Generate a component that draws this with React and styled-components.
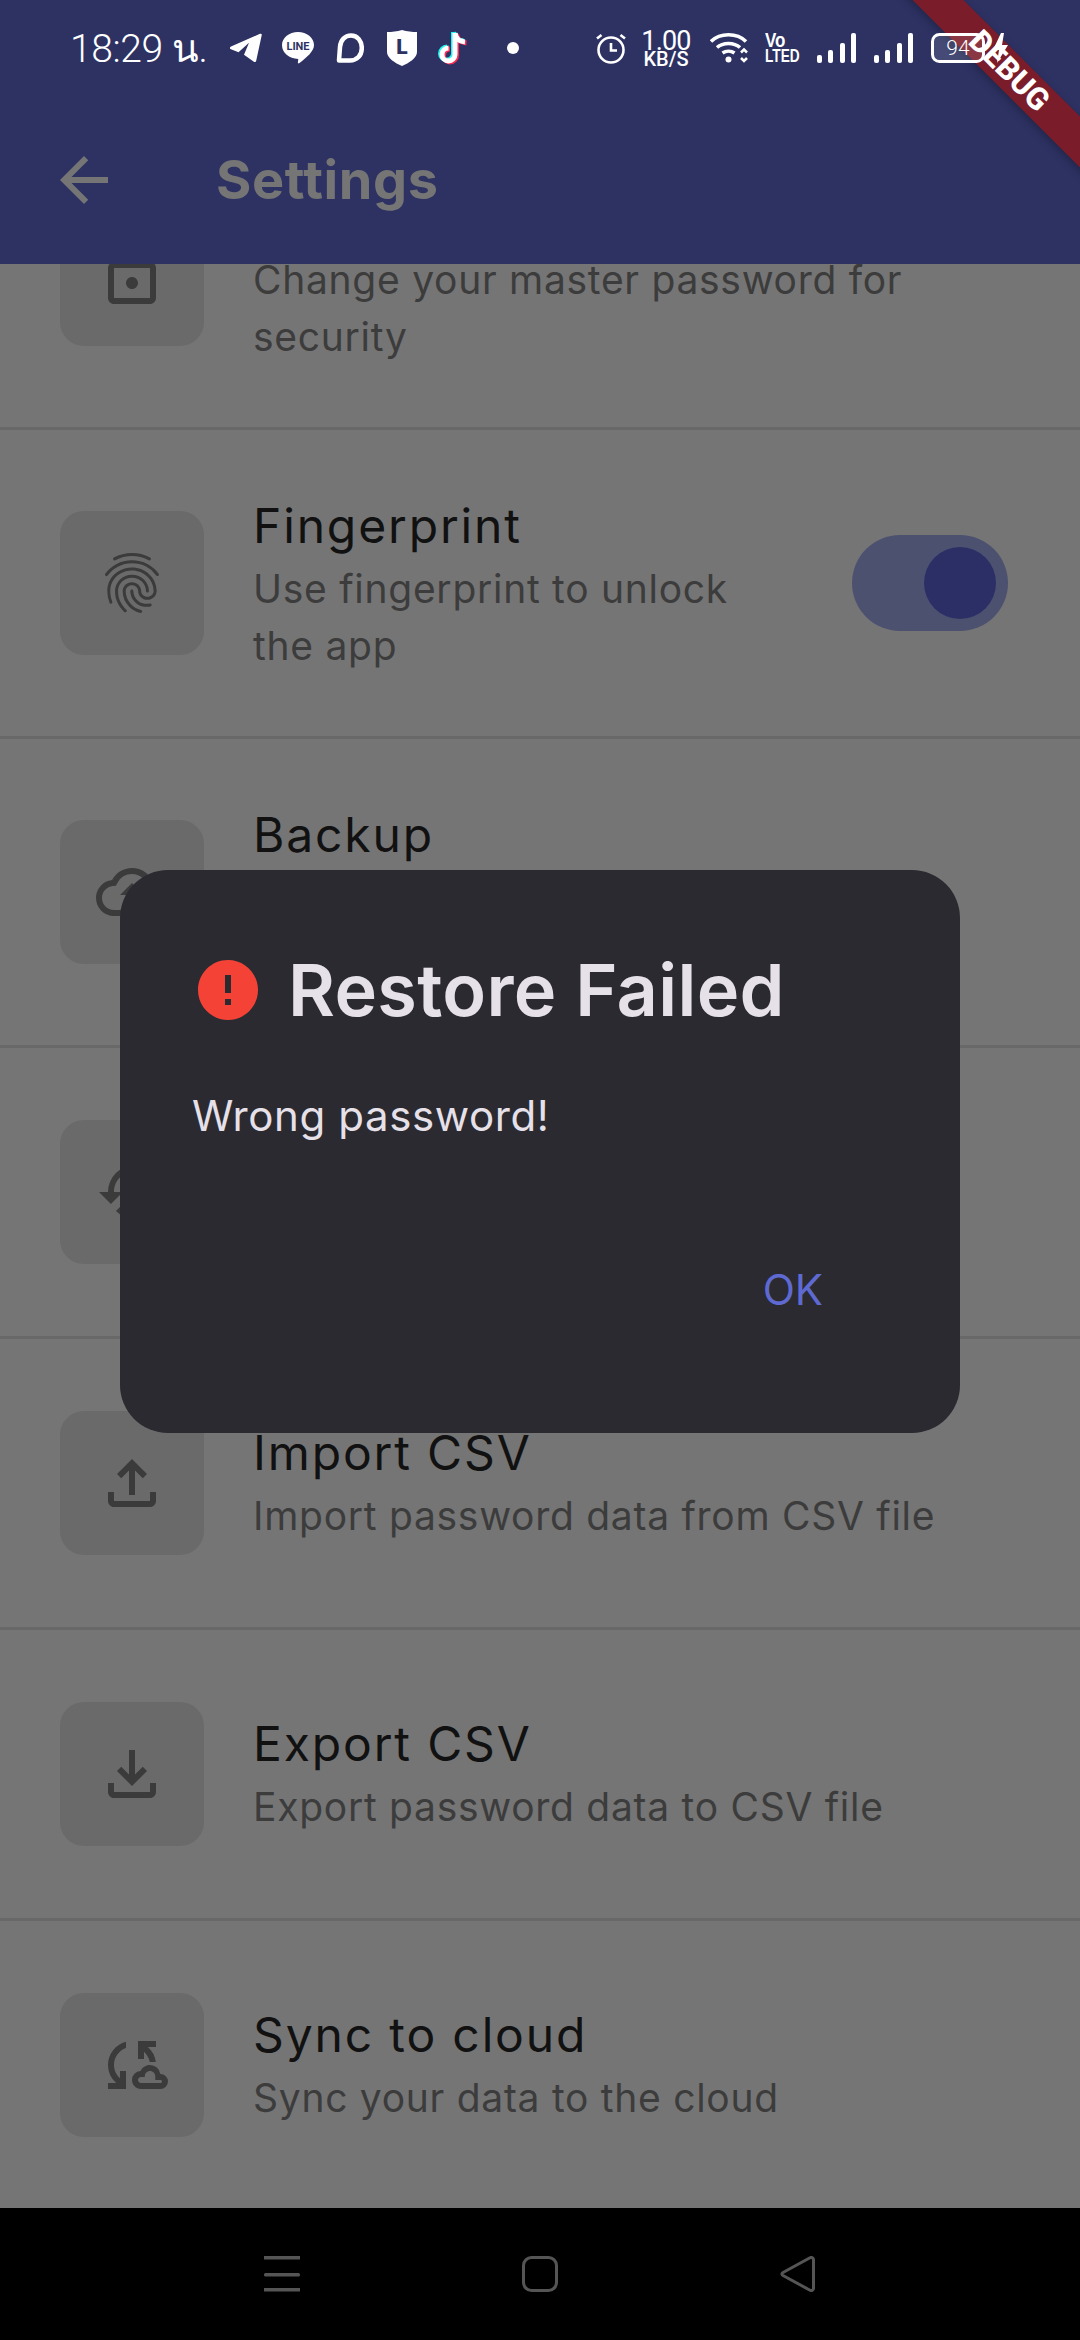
import React from "react";
import styled, { createGlobalStyle } from "styled-components";
import {
  MdArrowBack,
  MdError,
  MdFingerprint,
  MdOutlineBackup,
  MdOutlineCloudSync,
  MdOutlineFileDownload,
  MdOutlineFileUpload,
  MdOutlineLock,
  MdRestore,
} from "react-icons/md";

const GlobalStyle = createGlobalStyle`
  html, body {
    margin: 0;
    padding: 0;
    background: #000;
  }
  * {
    box-sizing: border-box;
  }
`;

const Screen = styled.div`
  position: relative;
  display: flex;
  flex-direction: column;
  width: 1080px;
  height: 2340px;
  overflow: hidden;
  font-family: Inter, "Noto Sans", sans-serif;
  background: #757575;
`;

const TopBar = styled.header`
  position: relative;
  z-index: 2;
  flex: none;
  height: 264px;
  overflow: hidden;
  background: #2d3263;
`;

const StatusBar = styled.div`
  position: relative;
  z-index: 1;
  display: flex;
  justify-content: space-between;
  align-items: center;
  height: 96px;
  padding: 0 71px 0 70px;
  color: #fff;
`;

const StatusGroup = styled.div`
  display: flex;
  align-items: center;
`;

const Clock = styled.span`
  width: 130px;
  font-family: Roboto, "Noto Sans", sans-serif;
  font-size: 39px;
  font-weight: 300;
  letter-spacing: -0.4px;
  white-space: nowrap;
`;

const StatusIcon = styled.svg`
  display: block;
  flex: none;
  margin-left: ${({ $left }) => $left || 0}px;
`;

const Speed = styled.div`
  display: flex;
  flex-direction: column;
  align-items: center;
  margin-left: 16px;
  width: 48px;
  font-family: Roboto, sans-serif;
  line-height: 1;
`;

const SpeedValue = styled.span`
  font-size: 27px;
  height: 22px;
  line-height: 22px;
  letter-spacing: -0.8px;
`;

const SpeedUnit = styled.span`
  font-size: 20px;
  font-weight: 500;
  height: 15px;
  line-height: 15px;
`;

const NetworkType = styled.div`
  display: flex;
  flex-direction: column;
  margin-left: 16px;
  width: 35px;
  font-family: "Liberation Sans", sans-serif;
  font-weight: 700;
  line-height: 15px;
`;

const NetworkLine = styled.span`
  font-size: ${({ $size }) => $size}px;
  transform: scaleX(${({ $squeeze }) => $squeeze});
  transform-origin: left center;
  white-space: nowrap;
`;

const Toolbar = styled.div`
  display: flex;
  align-items: center;
  height: 168px;
  padding-left: 48px;
  color: #757575;
  svg {
    flex: none;
    margin-right: 96px;
  }
`;

const PageTitle = styled.h1`
  margin: 0;
  font-size: 54px;
  font-weight: 700;
  line-height: 1;
  letter-spacing: 0.6px;
`;

const Content = styled.main`
  flex: 1;
  min-height: 0;
  overflow: hidden;
`;

const SettingsList = styled.div`
  margin-top: -143px;
`;

const Row = styled.div`
  display: flex;
  align-items: center;
  gap: 49px;
  min-height: 291px;
  padding: 62px 72px 62px 60px;
  border-bottom: 3px solid #686868;
`;

const IconBox = styled.div`
  display: flex;
  justify-content: center;
  align-items: center;
  flex: none;
  width: 144px;
  height: 144px;
  border-radius: 24px;
  background: #6a6a6a;
  color: #3b3b3b;
`;

const RowText = styled.div`
  flex: 1;
  min-width: 0;
  padding-top: ${({ $wrapped }) => ($wrapped ? 10 : 6)}px;
`;

const RowTitle = styled.div`
  margin-bottom: 10px;
  font-size: 48px;
  line-height: 48px;
  letter-spacing: 1.85px;
  color: #111;
`;

const RowSubtitle = styled.div`
  font-size: 39px;
  line-height: 57px;
  letter-spacing: 0.72px;
  color: #3c3c3c;
`;

const Toggle = styled.div`
  display: flex;
  justify-content: flex-end;
  align-items: center;
  flex: none;
  width: 156px;
  height: 96px;
  margin-left: 12px;
  padding-right: 12px;
  border-radius: 48px;
  background: #4d5170;
`;

const ToggleKnob = styled.div`
  width: 72px;
  height: 72px;
  border-radius: 50%;
  background: #2b2f66;
`;

const NavBar = styled.nav`
  position: relative;
  z-index: 2;
  display: flex;
  justify-content: space-between;
  align-items: center;
  flex: none;
  height: 132px;
  padding: 0 264px;
  background: #000;
`;

const Dialog = styled.div`
  position: absolute;
  z-index: 3;
  top: 870px;
  left: 120px;
  width: 840px;
  padding: 72px 72px 96px;
  border-radius: 48px;
  background: #2b2a31;
`;

const DialogHeader = styled.div`
  display: flex;
  align-items: center;
  gap: 24px;
  height: 96px;
  color: #f44336;
`;

const DialogTitle = styled.h2`
  margin: 0;
  font-size: 72px;
  font-weight: 600;
  line-height: 96px;
  letter-spacing: 0.35px;
  color: #e6e1e9;
`;

const DialogBody = styled.p`
  margin: 51px 0 0;
  font-size: 42px;
  line-height: 54px;
  letter-spacing: 0.6px;
  color: #e6e1e9;
`;

const DialogActions = styled.div`
  display: flex;
  justify-content: flex-end;
  margin-top: 98px;
`;

const OkButton = styled.button`
  height: 96px;
  padding: 0 65px 0 0;
  border: 0;
  background: none;
  font-family: inherit;
  font-size: 42px;
  color: #5e6ad2;
`;

const DebugBanner = styled.div`
  position: absolute;
  top: 53px;
  right: -129px;
  width: 400px;
  height: 36px;
  transform: rotate(45deg);
  background: #7b1c2a;
  box-shadow: 0 3px 9px rgba(0, 0, 0, 0.25);
  color: #fff;
  font-family: Roboto, sans-serif;
  font-size: 31px;
  font-weight: 800;
  line-height: 36px;
  text-align: center;
`;

const TIKTOK_LAYERS = [
  { color: "#25f4ee", dx: -1.5, dy: -1 },
  { color: "#fe2c55", dx: 1.5, dy: 1 },
  { color: "#fff", dx: 0, dy: 0 },
];

const TelegramIcon = () => (
  <StatusIcon $left={30} width="32" height="30" viewBox="0 0 32 30" fill="#fff">
    <path d="M1 13.5 30 .8c1.300-.5 2 .2 1.700 1.400l-5.500 25.500c-.3 1.500-1.500 1.800-2.700.9l-9.500-6.800 5-12-10.500 9.500-7.500-3c-1.500-.6-1.400-2.100 0-2.800Z" />
  </StatusIcon>
);

const LineIcon = () => (
  <StatusIcon $left={20} width="32" height="32" viewBox="0 0 32 32">
    <path
      fill="#fff"
      d="M16 0c8.800 0 16 5.700 16 13 0 6.500-7.500 12.500-14.500 18-1 .8-1.800.3-1.600-.8l.4-3.300C7 26.700 0 21 0 13 0 5.700 7.200 0 16 0Z"
    />
    <text x="16" y="18" textAnchor="middle" fontFamily="Roboto, sans-serif" fontSize="11" fontWeight="700" fill="#2d3263">
      LINE
    </text>
  </StatusIcon>
);

const ChatIcon = () => (
  <StatusIcon $left={22} width="28" height="30" viewBox="0 0 28 30" fill="none" stroke="#fff" strokeWidth="4.500">
    <path d="M3 27.500 4 14C4.500 7 9 2.500 15 2.500 21.500 2.500 25.800 8 25.800 15 25.800 22.500 21 27.500 14 27.500Z" strokeLinejoin="round" />
  </StatusIcon>
);

const ShieldIcon = () => (
  <StatusIcon $left={23} width="30" height="36" viewBox="0 0 30 36">
    <path fill="#fff" d="M15 0c5 1.500 10 2 15 2v20c0 6-8 11-15 14C8 33 0 28 0 22V2c5 0 10-.5 15-2Z" />
    <text x="15" y="24" textAnchor="middle" fontFamily="Roboto, sans-serif" fontSize="21" fontWeight="900" fill="#2d3263">
      L
    </text>
  </StatusIcon>
);

const TiktokIcon = () => (
  <StatusIcon $left={21} width="32" height="36" viewBox="0 0 32 36" fill="none" strokeWidth="5">
    {TIKTOK_LAYERS.map(({ color, dx, dy }) => (
      <g key={color} stroke={color} transform={`translate(${dx} ${dy})`}>
        <path d="M17 3v21.500a6.500 6.500 0 1 1-6.500-6.500" />
        <path d="M17 3c.5 5 4 8.500 10 9" />
      </g>
    ))}
  </StatusIcon>
);

const DotIcon = () => (
  <StatusIcon $left={37} width="12" height="12" viewBox="0 0 12 12" fill="#fff">
    <circle cx="6" cy="6" r="6" />
  </StatusIcon>
);

const AlarmIcon = () => (
  <StatusIcon width="30" height="31" viewBox="0 0 30 31" fill="none" stroke="#fff" strokeWidth="2.600">
    <circle cx="15" cy="17" r="12.500" />
    <path d="M15 10v7.500h6M1 5.500 5.500 2M29 5.500 24.500 2" />
  </StatusIcon>
);

const WifiIcon = () => (
  <StatusIcon $left={20} width="39" height="30" viewBox="0 0 39 30" fill="none" stroke="#fff" strokeWidth="3.500">
    <path d="M1 8.500C10-.5 27-.5 36 8.500M7 14.500c6-5.500 17-5.500 23 0M12.500 20c3.500-2.500 8.500-2.500 12 0" />
    <circle cx="18.500" cy="26.500" r="3" fill="#fff" stroke="none" />
    <path strokeWidth="2.500" d="M31 19.500l3-3 3 3M31 25l3 3 3-3" />
  </StatusIcon>
);

const SignalIcon = ({ left }) => (
  <StatusIcon $left={left} width="39" height="30" viewBox="0 0 39 30" fill="#fff">
    <rect x="0" y="22" width="5" height="8" rx="2" />
    <rect x="11" y="17" width="5" height="13" rx="2" />
    <rect x="23" y="10" width="5" height="20" rx="2" />
    <rect x="34" y="0" width="5" height="30" rx="2" />
  </StatusIcon>
);

const BatteryIcon = () => (
  <StatusIcon $left={18} width="78" height="30" viewBox="0 0 78 30">
    <rect x="1.500" y="1.500" width="51" height="27" rx="7" fill="#fff" fillOpacity="0.12" stroke="#fff" strokeWidth="3" />
    <text x="27" y="22" textAnchor="middle" fontFamily="Roboto, sans-serif" fontSize="21" fontWeight="300" fill="#fff">
      94
    </text>
    <path fill="#fff" d="M70 0 62 17h6l-2 13 11-18h-6l2-12Z" />
  </StatusIcon>
);

const NavMenuIcon = () => (
  <svg width="36" height="36" viewBox="0 0 36 36" fill="#555">
    <rect y="0" width="36" height="3.500" />
    <rect y="17" width="36" height="3.500" rx="1.500" />
    <rect y="32" width="36" height="3.500" />
  </svg>
);

const NavHomeIcon = () => (
  <svg width="36" height="36" viewBox="0 0 36 36" fill="none" stroke="#555" strokeWidth="3">
    <rect x="1.500" y="1.500" width="33" height="33" rx="8" />
  </svg>
);

const NavBackIcon = () => (
  <svg width="36" height="36" viewBox="0 0 36 36" fill="none" stroke="#555" strokeWidth="3" strokeLinejoin="round">
    <path d="M3 16.500 30 1.800c1.800-.9 3.500 0 3.500 2v28.400c0 2-1.700 2.900-3.500 2L3 19.500c-1.500-.9-1.500-2.100 0-3Z" />
  </svg>
);

const SETTINGS = [
  {
    icon: MdOutlineLock,
    title: "Change Password",
    subtitle: "Change your master password for security",
    wrapped: true,
  },
  {
    icon: MdFingerprint,
    title: "Fingerprint",
    subtitle: "Use fingerprint to unlock the app",
    wrapped: true,
    toggle: true,
  },
  {
    icon: MdOutlineBackup,
    title: "Backup",
    subtitle: "Create a backup of your encrypted password data",
    wrapped: true,
  },
  {
    icon: MdRestore,
    title: "Restore",
    subtitle: "Restore data from a backup file",
  },
  {
    icon: MdOutlineFileUpload,
    title: "Import CSV",
    subtitle: "Import password data from CSV file",
  },
  {
    icon: MdOutlineFileDownload,
    title: "Export CSV",
    subtitle: "Export password data to CSV file",
  },
  {
    icon: MdOutlineCloudSync,
    title: "Sync to cloud",
    subtitle: "Sync your data to the cloud",
  },
];

const App = () => (
  <Screen>
    <GlobalStyle />
    <TopBar>
      <DebugBanner>DEBUG</DebugBanner>
      <StatusBar>
        <StatusGroup>
          <Clock>18:29 น.</Clock>
          <TelegramIcon />
          <LineIcon />
          <ChatIcon />
          <ShieldIcon />
          <TiktokIcon />
          <DotIcon />
        </StatusGroup>
        <StatusGroup>
          <AlarmIcon />
          <Speed>
            <SpeedValue>1.00</SpeedValue>
            <SpeedUnit>KB/S</SpeedUnit>
          </Speed>
          <WifiIcon />
          <NetworkType>
            <NetworkLine $size={20} $squeeze={0.85}>Vo</NetworkLine>
            <NetworkLine $size={19} $squeeze={0.72}>LTED</NetworkLine>
          </NetworkType>
          <SignalIcon left={17} />
          <SignalIcon left={18} />
          <BatteryIcon />
        </StatusGroup>
      </StatusBar>
      <Toolbar>
        <MdArrowBack size={72} />
        <PageTitle>Settings</PageTitle>
      </Toolbar>
    </TopBar>

    <Content>
      <SettingsList>
        {SETTINGS.map(({ icon: Icon, title, subtitle, wrapped, toggle }) => (
          <Row key={title}>
            <IconBox>
              <Icon size={72} />
            </IconBox>
            <RowText $wrapped={wrapped}>
              <RowTitle>{title}</RowTitle>
              <RowSubtitle>{subtitle}</RowSubtitle>
            </RowText>
            {toggle && (
              <Toggle>
                <ToggleKnob />
              </Toggle>
            )}
          </Row>
        ))}
      </SettingsList>
    </Content>

    <NavBar>
      <NavMenuIcon />
      <NavHomeIcon />
      <NavBackIcon />
    </NavBar>

    <Dialog>
      <DialogHeader>
        <MdError size={72} />
        <DialogTitle>Restore Failed</DialogTitle>
      </DialogHeader>
      <DialogBody>Wrong password!</DialogBody>
      <DialogActions>
        <OkButton>OK</OkButton>
      </DialogActions>
    </Dialog>
  </Screen>
);

export default App;
